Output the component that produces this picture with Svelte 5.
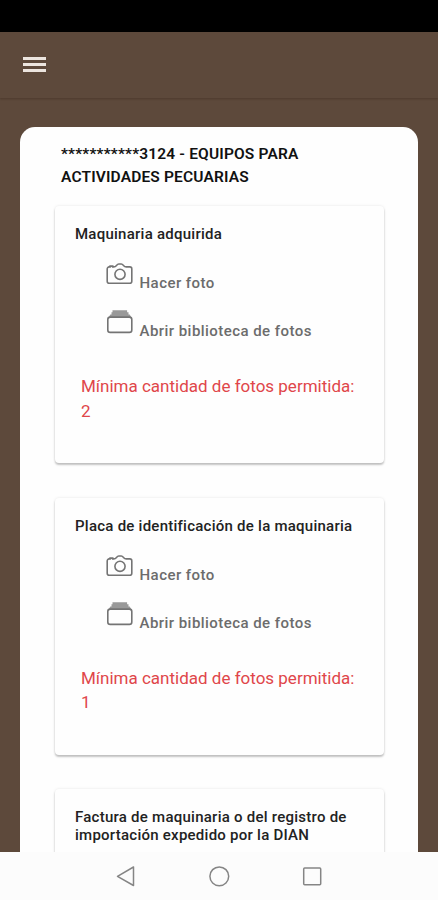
<script>
  const account = '***********3124 - EQUIPOS PARA ACTIVIDADES PECUARIAS';
  const sections = [
    { title: 'Maquinaria adquirida', min: 2 },
    { title: 'Placa de identificación de la maquinaria', min: 1 },
    { title: 'Factura de maquinaria o del registro de importación expedido por la DIAN' }
  ];
</script>

<div class="screen">
  <div class="status"></div>
  <header>
    <button class="menu" aria-label="Menú"><i></i><i></i><i></i></button>
  </header>

  <main>
    <div class="sheet">
      <h1>{account}</h1>
      {#each sections as s}
        <section class="card">
          <h2>{s.title}</h2>
          {#if s.min}
            <div class="action">
              <svg width="28" height="24" viewBox="0 0 28 24" aria-hidden="true">
                <path d="M3.2 4.9h.9v-.8h2.6v.8h1.1c1.3 0 2-.6 2.7-1.5.8-1 1.3-1.4 2.3-1.4h2.4c1 0 1.5.4 2.3 1.4.7.9 1.4 1.5 2.7 1.5h3.6a2 2 0 0 1 2 2v12.3a2 2 0 0 1-2 2H3.200a2 2 0 0 1-2-2V6.900a2 2 0 0 1 2-2z" />
                <circle cx="14" cy="12.300" r="5.100" />
              </svg>
              <span>Hacer foto</span>
            </div>
            <div class="action">
              <svg width="28" height="24" viewBox="0 0 28 24" aria-hidden="true">
                <path class="stack" d="M6.500 .3h14.600v2h1.400v2.200h1.200l1.600 2.700H2.700l1.600-2.700h1.200V2.300h1z" />
                <rect x="1.800" y="7.100" width="24" height="15.300" rx="2.400" />
              </svg>
              <span>Abrir biblioteca de fotos</span>
            </div>
            <p class="error">Mínima cantidad de fotos permitida: {s.min}</p>
          {/if}
        </section>
      {/each}
    </div>
  </main>

  <nav>
    <svg width="438" height="48" viewBox="0 0 438 48" aria-hidden="true">
      <path d="M133.500 15v18.500L117.500 24.300z" />
      <circle cx="219.300" cy="24.300" r="9.400" />
      <rect x="303.700" y="16" width="17" height="16.700" rx="1" />
    </svg>
  </nav>
</div>

<style>
  :global(body) { margin: 0; background: #5d493b; }
  .screen {
    width: 438px;
    height: 900px;
    display: flex;
    flex-direction: column;
    overflow: hidden;
    background: #5d493b;
    font-family: Roboto, sans-serif;
  }
  .status { flex: none; height: 32px; background: #000; }
  header {
    flex: none;
    height: 66px;
    box-sizing: border-box;
    padding: 24px 23px 0;
    box-shadow: 0 1px 2px rgba(40, 20, 10, .3);
  }
  .menu {
    display: flex;
    flex-direction: column;
    gap: 3px;
    width: 23px;
    padding: 1px 0 0;
    border: 0;
    background: none;
  }
  .menu i { width: 23px; height: 3px; background: #ece5df; }
  main { flex: 1; min-height: 0; overflow: hidden; padding: 29px 20px 0; }
  .sheet {
    width: 398px;
    box-sizing: border-box;
    padding: 16px 34px 0 35px;
    border-radius: 15px;
    background: #fefefe;
  }
  h1 {
    width: 270px;
    margin: 0 0 17px 6px;
    font-size: 15.5px;
    line-height: 23px;
    font-weight: 600;
    letter-spacing: .16px;
    color: #111;
  }
  .card {
    height: 257px;
    box-sizing: border-box;
    margin-bottom: 34.5px;
    padding: 19px 20px 0;
    border-radius: 4px;
    background: #fefefe;
    box-shadow: 0 2px 2px rgba(0, 0, 0, .22), 0 0 3px rgba(0, 0, 0, .1);
  }
  .card:last-child { height: 80px; margin-bottom: 0; }
  h2 {
    margin: 0 0 19px;
    font-size: 15px;
    line-height: 18px;
    font-weight: 500;
    letter-spacing: .25px;
    color: #222;
  }
  .action {
    display: flex;
    align-items: flex-start;
    gap: 5.5px;
    height: 48px;
    padding-left: 31px;
    color: #6c6c6c;
  }
  .action svg { flex: none; fill: none; stroke: #747474; stroke-width: 1.6; }
  .action .stack { fill: #999; stroke: none; }
  .action span {
    padding-top: 12px;
    font-size: 15px;
    line-height: 18px;
    font-weight: 500;
    letter-spacing: .45px;
  }
  .error {
    margin: 16px 0 0 6px;
    font-size: 17px;
    line-height: 24.5px;
    color: #e0464a;
  }
  nav { flex: none; height: 48px; background: #fcfcfc; }
  nav svg { display: block; fill: none; stroke: #858585; stroke-width: 1.5; stroke-linejoin: round; }
</style>
